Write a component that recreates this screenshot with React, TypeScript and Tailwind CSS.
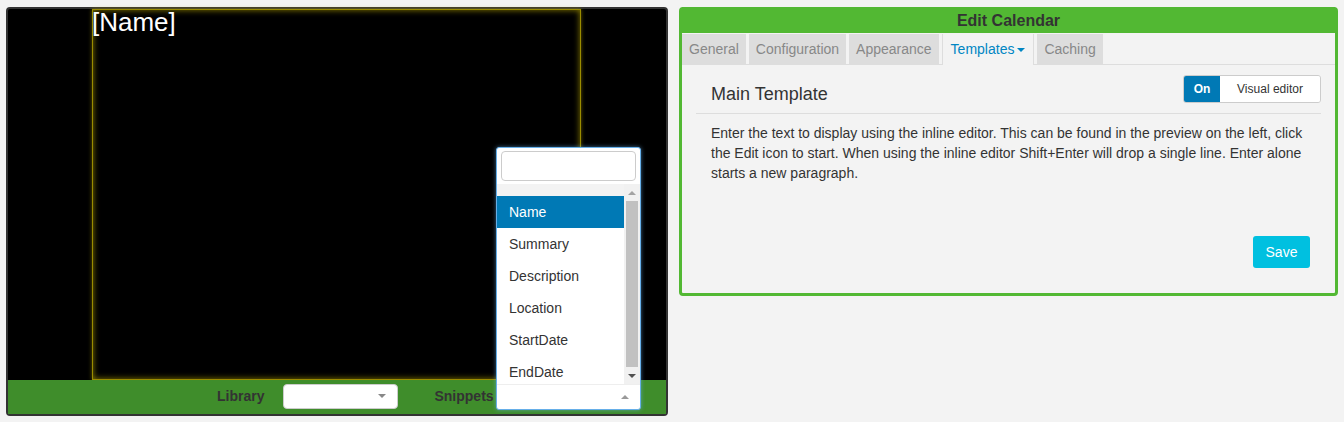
const font = { fontFamily: '"Liberation Sans", Arial, sans-serif' }

const tabs = ['General', 'Configuration', 'Appearance', 'Templates', 'Caching']
const fields = ['Name', 'Summary', 'Description', 'Location', 'StartDate', 'EndDate']

function SnippetDropdown() {
  return (
    <div className="absolute left-[488px] top-[138px] w-[145px] h-[263px] bg-white border border-[#66afe9] rounded-[3px] flex flex-col overflow-hidden shadow-[0_0_4px_rgba(102,175,233,0.6)]">
      <div className="px-[4px] pt-[3px] pb-[3px]">
        <div className="h-[30px] border border-[#ccc] rounded-[4px] bg-white" />
      </div>
      <div className="flex h-[200px]">
        <div className="flex-1 flex flex-col overflow-hidden">
          <div className="h-[12px] shrink-0 bg-[#f3f3f3]" />
          {fields.map((f, i) => (
            <div
              key={f}
              className={
                'h-[32px] shrink-0 flex items-center pl-[12px] text-[14px] ' +
                (i === 0 ? 'bg-[#0079b5] text-white' : 'text-[#333]')
              }
            >
              {f}
            </div>
          ))}
        </div>
        <div className="w-[16px] bg-[#f1f1f1] flex flex-col items-center">
          <div className="h-[17px] flex items-center justify-center">
            <div className="w-0 h-0 border-l-[4px] border-r-[4px] border-b-[4px] border-l-transparent border-r-transparent border-b-[#a3a3a3]" />
          </div>
          <div className="w-[12px] flex-1 bg-[#c1c1c1]" />
          <div className="h-[17px] flex items-center justify-center">
            <div className="w-0 h-0 border-l-[4px] border-r-[4px] border-t-[4px] border-l-transparent border-r-transparent border-t-[#505050]" />
          </div>
        </div>
      </div>
      <div className="flex-1 border-t border-[#eee] flex items-center justify-end pr-[11px]">
        <div className="w-0 h-0 border-l-[4px] border-r-[4px] border-b-[4px] border-l-transparent border-r-transparent border-b-[#999]" />
      </div>
    </div>
  )
}

function Preview() {
  return (
    <div className="relative w-[662px] h-[409px] border-2 border-[#333] rounded-[4px] bg-black flex flex-col">
      <div className="flex-1 flex">
        <div className="ml-[84px] w-[489px] h-[371px] border border-[#9a8c00] shadow-[inset_0_0_6px_rgba(200,180,0,0.7),0_0_4px_rgba(200,180,0,0.5)]">
          <div className="text-white text-[26px] leading-[28px] -mt-[2px] -ml-px">[Name]</div>
        </div>
      </div>
      <div className="h-[34px] bg-[#3f8d2b] flex items-center text-[14px] font-bold text-[#333] pb-[2px]">
        <span className="ml-[209px]">Library</span>
        <div className="ml-[19px] w-[115px] h-[25px] bg-white rounded-[4px] border border-[#ccc] flex items-center justify-end pr-[11px]">
          <div className="w-0 h-0 border-l-[4px] border-r-[4px] border-t-[4px] border-l-transparent border-r-transparent border-t-[#888]" />
        </div>
        <span className="ml-[36px]">Snippets</span>
      </div>
      <SnippetDropdown />
    </div>
  )
}

function Editor() {
  return (
    <div className="w-[659px] h-[289px] border-[3px] border-[#52b833] rounded-[4px] bg-[#f3f3f3] flex flex-col">
      <div className="h-[26px] shrink-0 bg-[#52b833] -mt-[3px] pt-[3px] text-center font-bold text-[16px] text-[#333] leading-[22px]">
        Edit Calendar
      </div>
      <div className="h-[32px] shrink-0 flex items-stretch border-b border-[#ddd] pt-px">
        {tabs.map((t) => (
          <div
            key={t}
            className={
              'mr-[3px] flex items-center text-[14px] ' +
              (t === 'Templates'
                ? 'bg-[#f3f3f3] text-[#0086c3] border-l border-r border-[#ddd] -mb-px px-[8px]'
                : 'bg-[#ddd] text-[#888] px-[7px]')
            }
          >
            {t}
            {t === 'Templates' && (
              <span className="ml-[3px] w-0 h-0 border-l-[4px] border-r-[4px] border-t-[4px] border-l-transparent border-r-transparent border-t-[#0086c3]" />
            )}
          </div>
        ))}
      </div>
      <div className="px-[14px] pt-[10px] flex flex-col flex-1">
        <div className="flex items-center justify-between pl-[15px] pb-[10px] border-b border-[#ddd]">
          <span className="text-[18px] text-[#333] relative top-[5px]">Main Template</span>
          <div className="flex h-[28px] border border-[#ccc] rounded-[3px] overflow-hidden text-[12px]">
            <div className="w-[36px] bg-[#0079b5] text-white font-bold flex items-center justify-center">On</div>
            <div className="w-[100px] bg-white text-[#333] flex items-center justify-center">Visual editor</div>
          </div>
        </div>
        <p className="pl-[15px] pr-[16px] pt-[9px] text-[14px] leading-[20px] text-[#333]">
          Enter the text to display using the inline editor. This can be found in the preview on the left, click
          the Edit icon to start. When using the inline editor Shift+Enter will drop a single line. Enter alone
          starts a new paragraph.
        </p>
        <div className="flex justify-end mt-[53px] pr-[11px]">
          <div className="w-[57px] h-[32px] bg-[#00c0e0] rounded-[3px] text-white text-[14px] flex items-center justify-center">
            Save
          </div>
        </div>
      </div>
    </div>
  )
}

export default function App() {
  return (
    <div style={font} className="w-[1344px] h-[422px] bg-[#f3f3f3] flex items-start gap-[11px] pl-[6px] pt-[7px]">
      <Preview />
      <Editor />
    </div>
  )
}
